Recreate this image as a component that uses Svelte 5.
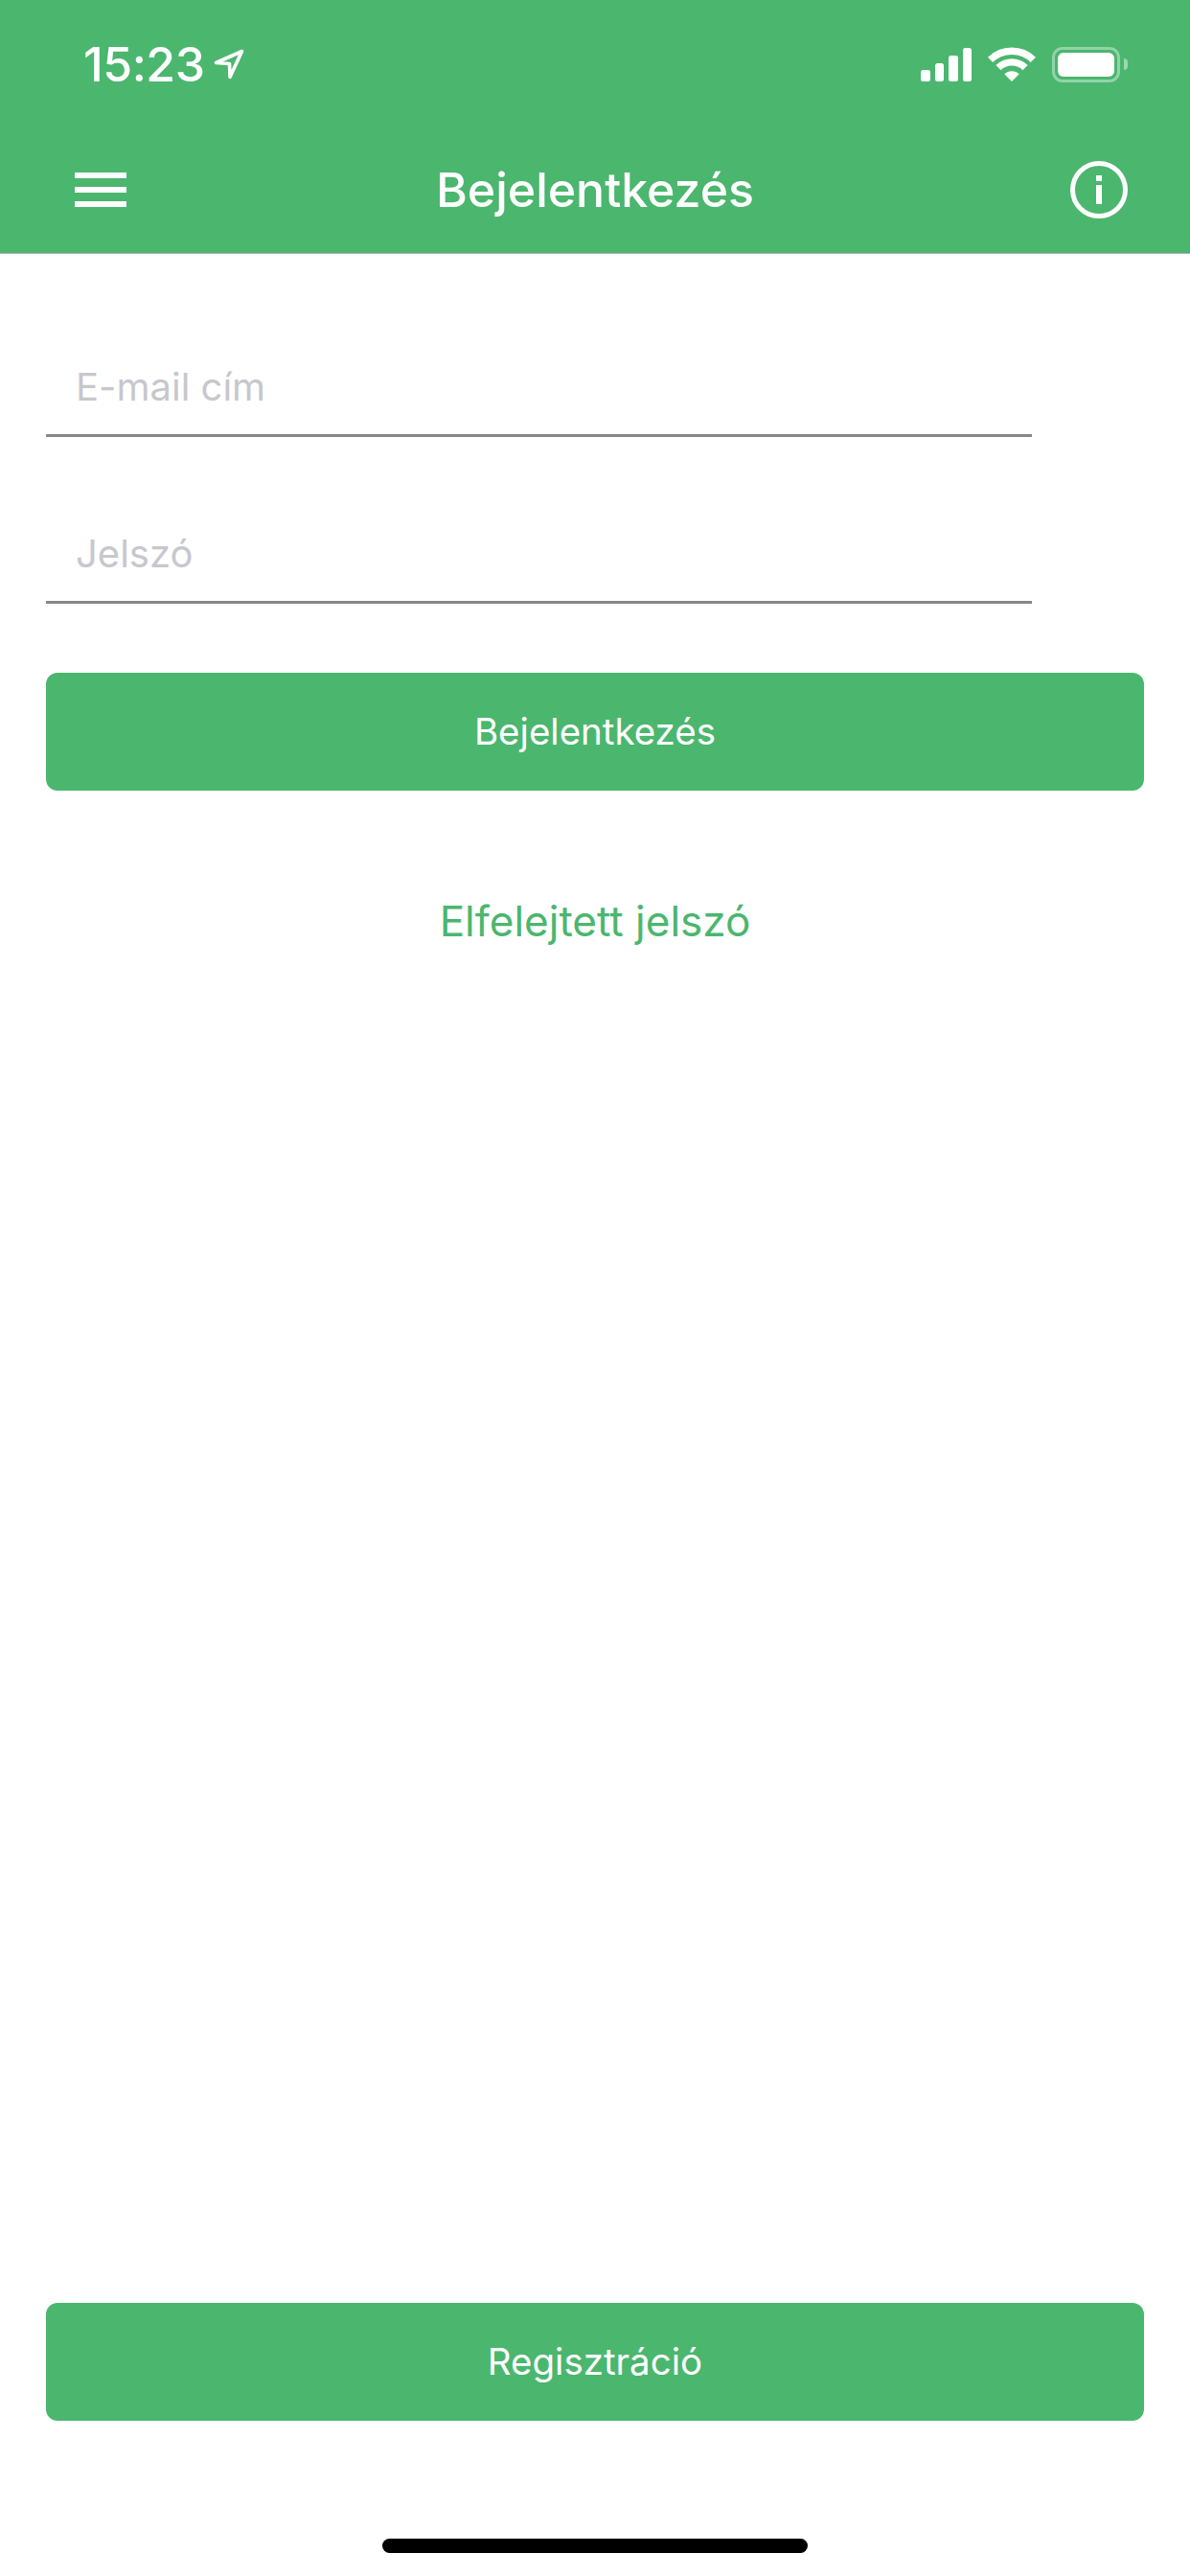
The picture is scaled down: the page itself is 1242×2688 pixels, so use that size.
<script>
  const signalBars = [12, 19, 27, 35];
</script>

<div class="page">
  <header class="header">
    <div class="status">
      <div class="clock">
        <span class="time">15:23</span>
        <svg class="arrow" viewBox="0 0 32 32" width="32" height="32" aria-hidden="true">
          <path d="M29.5 2.5 2.5 14.5 16.5 15.5 17 29.5Z" fill="none" stroke="#fff" stroke-width="3.6" stroke-linejoin="round" />
        </svg>
      </div>
      <div class="indicators">
        <div class="signal">
          {#each signalBars as h}
            <span class="bar" style="height:{h}px"></span>
          {/each}
        </div>
        <svg class="wifi" viewBox="0 0 50 36" width="50" height="36" aria-hidden="true">
          <path d="M2.6 13.4A32 32 0 0 1 47.4 13.4" fill="none" stroke="#fff" stroke-width="7.4" />
          <path d="M11 21.6A20 20 0 0 1 39 21.6" fill="none" stroke="#fff" stroke-width="7.4" />
          <path d="M25 36 17.3 28.3A11 11 0 0 1 32.7 28.3Z" fill="#fff" />
        </svg>
        <div class="battery">
          <div class="cell"><span class="charge"></span></div>
          <span class="cap"></span>
        </div>
      </div>
    </div>
    <nav class="nav">
      <div class="burger" aria-label="Menü">
        <span></span><span></span><span></span>
      </div>
      <h1>Bejelentkezés</h1>
      <svg class="info" viewBox="0 0 60 60" width="60" height="60" aria-hidden="true">
        <circle cx="30" cy="30" r="27.5" fill="none" stroke="#fff" stroke-width="5" />
        <rect x="27" y="15" width="6" height="6" fill="#fff" />
        <rect x="27" y="25" width="6" height="20" fill="#fff" />
      </svg>
    </nav>
  </header>

  <main class="main">
    <label class="field"><span>E-mail cím</span></label>
    <label class="field"><span>Jelszó</span></label>
    <button class="btn login">Bejelentkezés</button>
    <a class="forgot" href="#forgot">Elfelejtett jelszó</a>
    <button class="btn register">Regisztráció</button>
  </main>

  <footer class="footer"><span class="home"></span></footer>
</div>

<style>
  :global(body) {
    margin: 0;
    background: #fff;
  }
  .page {
    width: 1242px;
    height: 2688px;
    display: flex;
    flex-direction: column;
    font-family: Inter, Roboto, "Liberation Sans", sans-serif;
    background: #fff;
    overflow: hidden;
  }
  .header {
    background: #4bb66e;
    border-bottom: 1px solid #b4b4b4;
    color: #fff;
  }
  .status {
    height: 132px;
    box-sizing: border-box;
    padding: 2px 65px 0 87px;
    display: flex;
    align-items: center;
    justify-content: space-between;
  }
  .clock {
    display: flex;
    align-items: center;
    gap: 10px;
  }
  .time {
    font-size: 50px;
    font-weight: 500;
    line-height: 1;
    letter-spacing: -0.5px;
  }
  .indicators {
    display: flex;
    align-items: center;
    gap: 17px;
  }
  .signal {
    display: flex;
    align-items: flex-end;
    gap: 5px;
    height: 35px;
  }
  .bar {
    width: 9.5px;
    background: #fff;
    border-radius: 2.5px;
  }
  .battery {
    display: flex;
    align-items: center;
    gap: 4px;
  }
  .cell {
    box-sizing: border-box;
    width: 71px;
    height: 37px;
    padding: 3px;
    border: 3px solid rgba(255, 255, 255, 0.4);
    border-radius: 11px;
    display: flex;
  }
  .charge {
    flex: 1;
    background: #fff;
    border-radius: 6px;
  }
  .cap {
    width: 4px;
    height: 12px;
    background: rgba(255, 255, 255, 0.45);
    border-radius: 0 4px 4px 0;
  }
  .nav {
    height: 132px;
    box-sizing: border-box;
    padding: 0 65px;
    display: grid;
    grid-template-columns: 1fr auto 1fr;
    align-items: center;
  }
  .burger {
    width: 54px;
    margin-left: 13px;
    display: flex;
    flex-direction: column;
    gap: 9px;
  }
  .burger span {
    height: 6px;
    background: #fff;
  }
  h1 {
    margin: 0;
    font-size: 50px;
    font-weight: 550;
    line-height: 1;
    color: #fff;
  }
  .info {
    justify-self: end;
  }
  .main {
    flex: 1;
    display: flex;
    flex-direction: column;
    padding: 17px 48px 0;
  }
  .field {
    display: flex;
    align-items: flex-end;
    box-sizing: border-box;
    width: 1029px;
    height: 174px;
    padding: 0 0 25px 31px;
    border-bottom: 3px solid #888;
    color: #c7c7cd;
    font-size: 40px;
    line-height: 1.2;
  }
  .btn {
    display: block;
    width: 100%;
    height: 123px;
    padding: 0 0 2px;
    border: 0;
    border-radius: 12px;
    background: #4bb66e;
    color: #fff;
    font: inherit;
    font-size: 38.5px;
  }
  .login {
    margin-top: 72px;
  }
  .forgot {
    margin-top: 110px;
    text-align: center;
    color: #4bb66e;
    font-size: 44px;
    line-height: 1.2;
    text-decoration: none;
  }
  .register {
    margin-top: auto;
  }
  .footer {
    height: 162px;
    box-sizing: border-box;
    padding-top: 123px;
    display: flex;
    justify-content: center;
    align-items: flex-start;
  }
  .home {
    width: 444px;
    height: 15px;
    background: #000;
    border-radius: 8px;
  }
</style>
